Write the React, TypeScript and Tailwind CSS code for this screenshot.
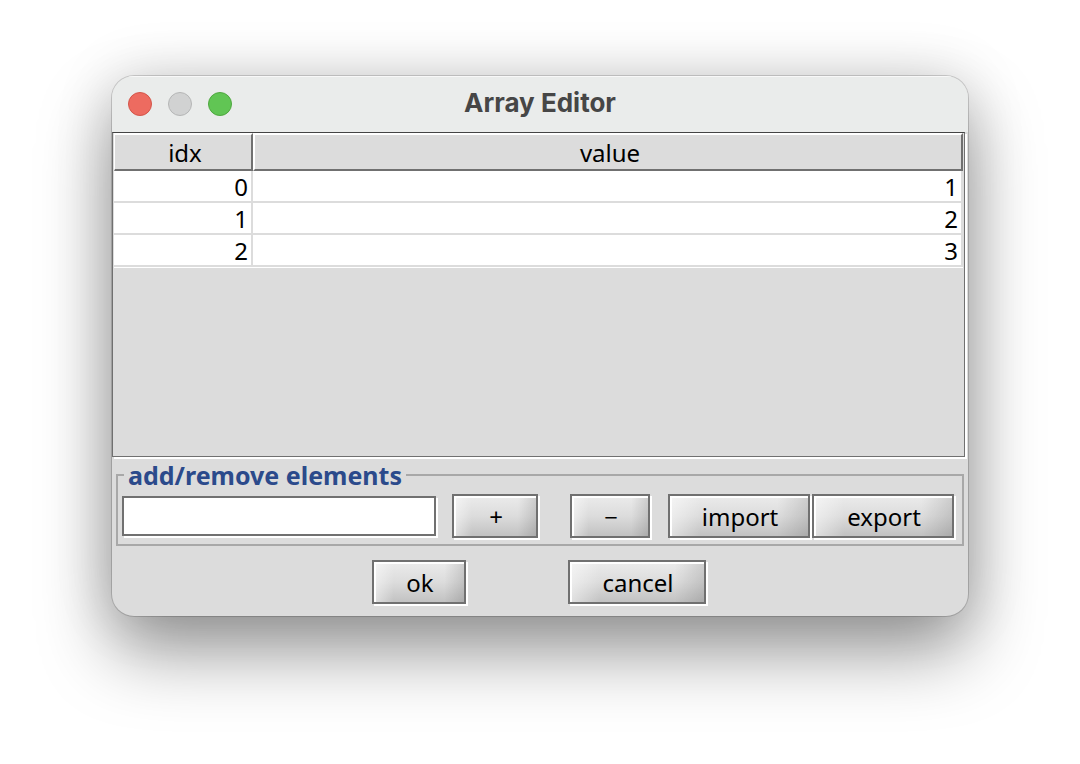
import type { ReactNode } from "react";

const rows = [
  { idx: 0, value: 1 },
  { idx: 1, value: 2 },
  { idx: 2, value: 3 },
];

function PushButton({ className, label, children }: { className: string; label?: string; children: ReactNode }) {
  return (
    <button
      type="button"
      aria-label={label}
      className={`h-11 shrink-0 border-2 border-[#707070] bg-[linear-gradient(to_right,rgba(255,255,255,0.5),transparent_22%,transparent_78%,rgba(0,0,0,0.12)),linear-gradient(to_bottom,#ebebeb,#dcdcdc_50%,#c2c2c2)] pt-0.5 pl-0.5 text-2xl leading-9 shadow-[2px_2px_0_#fff,inset_2px_2px_0_#fff] ${className}`}
    >
      {children}
    </button>
  );
}

export default function App() {
  return (
    <main className="min-h-screen bg-white px-28 pt-19 font-[family-name:'Noto_Sans',sans-serif] text-black">
      <section className="overflow-hidden rounded-[22px] bg-[#dcdcdc] shadow-[0_0_0_1px_rgba(0,0,0,0.16),0_36px_72px_rgba(0,0,0,0.4),0_0_60px_rgba(0,0,0,0.14)]">
        <header className="grid h-14 grid-cols-[1fr_auto_1fr] items-center bg-[#eaeceb] px-4 shadow-[inset_0_1px_0_#f8f8f8]">
          <div className="flex gap-4">
            <button type="button" aria-label="Close" className="size-6 rounded-full border border-[#d35549] bg-[#ed6b60]" />
            <button type="button" aria-label="Minimize" className="size-6 rounded-full border border-[#b5b6b6] bg-[#d1d2d2]" />
            <button type="button" aria-label="Zoom" className="size-6 rounded-full border border-[#4fa73f] bg-[#61c554]" />
          </div>
          <h1 className="pb-0.5 font-[family-name:Inter,'Liberation_Sans',sans-serif] text-[26px] leading-8 font-bold text-[#464646]">Array Editor</h1>
        </header>

        <div className="mr-[3px] h-[325px] border border-t-[#444] border-r-[#707070] border-b-[#707070] border-l-[#707070] pr-px pl-px shadow-[2px_2px_0_#fff]">
          <table className="w-full table-fixed border-separate border-spacing-0 text-2xl">
            <colgroup>
              <col className="w-[139px]" />
              <col />
            </colgroup>
            <thead>
              <tr>
                <th className="h-[38px] border-t-2 border-r-2 border-b-2 border-l border-t-white border-r-[#707070] border-b-[#707070] border-l-white p-0 pt-0.5 pl-1 leading-8 font-normal">idx</th>
                <th className="h-[38px] border-t-2 border-r-2 border-b-2 border-l-2 border-t-white border-r-[#707070] border-b-[#707070] border-l-white p-0 pt-0.5 pl-1 leading-8 font-normal">value</th>
              </tr>
            </thead>
            <tbody>
              {rows.map((row) => (
                <tr key={row.idx} className="bg-white text-right">
                  <td className="h-8 border-r-2 border-b-2 border-[#dcdcdc] p-0 pt-0.5 pr-[3px] leading-7">{row.idx}</td>
                  <td className="h-8 border-r-2 border-b-2 border-[#dcdcdc] p-0 pt-0.5 pr-[3px] leading-7">{row.value}</td>
                </tr>
              ))}
            </tbody>
          </table>
          <div className="h-px bg-white" />
        </div>

        <form className="pt-0.5" onSubmit={(e) => e.preventDefault()}>
          <fieldset className="mx-1 min-w-0 border-2 border-[#a8a8a8] pt-[3px] pr-2 pb-1.5 pl-1">
            <legend className="ml-0.5 px-1 text-[25px] leading-8 font-bold text-[#2b4a8b]">add/remove elements</legend>
            <div className="flex items-center">
              <input
                aria-label="Elements"
                type="text"
                className="h-10 w-0 min-w-0 flex-1 border-2 border-[#707070] bg-white px-1 text-2xl shadow-[2px_2px_0_#fff] outline-none"
              />
              <PushButton className="ml-4 w-[86px]" label="Add">+</PushButton>
              <PushButton className="ml-8 w-20" label="Remove">−</PushButton>
              <PushButton className="ml-4.5 w-[142px]">import</PushButton>
              <PushButton className="ml-0.5 w-[142px]">export</PushButton>
            </div>
          </fieldset>
          <div className="flex justify-center gap-[102px] pt-3.5 pr-0.5 pb-3">
            <PushButton className="w-[94px]">ok</PushButton>
            <PushButton className="w-[138px]">cancel</PushButton>
          </div>
        </form>
      </section>
    </main>
  );
}
